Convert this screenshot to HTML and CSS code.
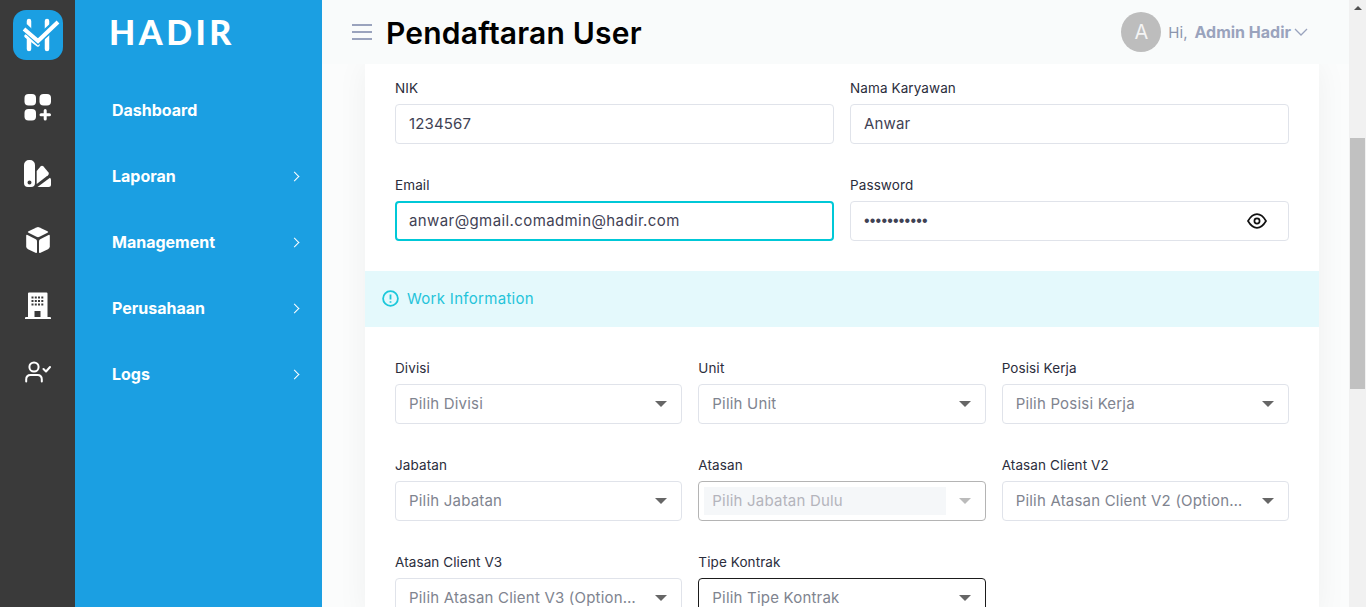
FILE: index.html
```html
<!DOCTYPE html>
<html lang="en">
<head>
    <meta charset="UTF-8">
    <title>Pendaftaran User</title>
    <link rel="stylesheet" href="styles.css">
</head>
<body>
<div class="app">
    <div class="rail">
        <div class="rail-logo">
            <svg width="50" height="50" viewBox="0 0 50 50" fill="none" stroke-linecap="round">
                <path d="M16 11V39M34 11V39" stroke="#fff" stroke-width="4.5"/>
                <path d="M13 26L25 35" stroke="#fff" stroke-width="3.500"/>
                <path d="M11 17L25 30L46 11" stroke="#1b9fe2" stroke-width="8" stroke-linecap="butt"/>
                <path d="M11 19L25 31L45 12" stroke="#fff" stroke-width="4" stroke-linecap="butt"/>
            </svg>
        </div>
        <div class="rail-icon">
            <svg width="28" height="28" viewBox="0 0 28 28" fill="#fff">
                <rect x="0.500" y="0" width="11.500" height="11.500" rx="4"/>
                <rect x="15.500" y="0" width="11.500" height="11.500" rx="4"/>
                <rect x="0.500" y="15" width="11.500" height="11.500" rx="4"/>
                <path d="M19.700 16.500a1.500 1.500 0 0 1 3 0V19.300H25.500a1.500 1.500 0 0 1 0 3H22.700V25a1.500 1.500 0 0 1-3 0V22.300H17a1.500 1.500 0 0 1 0-3H19.700Z"/>
            </svg>
        </div>
        <div class="rail-icon">
            <svg width="28" height="28" viewBox="0 0 28 28" fill="#fff">
                <path fill-rule="evenodd" d="M5 0H6A5 5 0 0 1 11 5V23A4 4 0 0 1 7 27H4A4 4 0 0 1 0 23V5A5 5 0 0 1 5 0ZM5.500 20.500a2 2 0 1 0 0 4a2 2 0 1 0 0-4Z"/>
                <path d="M12.700 11L16.500 6.500Q18 5 19.500 6.500L24.500 12.500Q25.500 14 24 15.200L12.700 24Z"/>
                <path d="M13.500 27L26 17.800Q27 18.500 27 20V24.500Q27 27 24.500 27Z"/>
            </svg>
        </div>
        <div class="rail-icon">
            <svg width="28" height="28" viewBox="0 0 28 28" fill="#fff">
                <path d="M12.500 1.400Q14 .7 15.500 1.400L23.500 5.200Q25 6 23.500 6.800L15.500 10.800Q14 11.500 12.500 10.800L4.500 6.800Q3 6 4.500 5.200Z"/>
                <path d="M2.200 9.800Q2.200 8.500 3.500 9L11.800 13.200Q13 13.900 13 15.200V26Q13 27.500 11.500 26.800L4 23.200Q2.200 22.200 2.200 20.500Z"/>
                <path d="M25.800 9.800Q25.800 8.500 24.500 9L16.200 13.200Q15 13.900 15 15.200V26Q15 27.500 16.500 26.800L24 23.200Q25.800 22.200 25.800 20.500Z"/>
            </svg>
        </div>
        <div class="rail-icon">
            <svg width="26" height="28" viewBox="0 0 26 28" fill="#fff">
                <path fill-rule="evenodd" d="M3 1.500Q3 .5 4 .5H21.500Q22.500 .5 22.500 1.500V25H25Q26 25 26 26V27H0V26Q0 25 1 25H3ZM9.500 19V25H15.500V19ZM6.500 4.500V6.500H8.500V4.500ZM9.800 4.500V6.500H11.800V4.500ZM13 4.500V6.500H15V4.500ZM16.300 4.500V6.500H18.300V4.500ZM6.500 8V10H8.500V8ZM9.800 8V10H11.800V8ZM13 8V10H15V8ZM16.300 8V10H18.300V8ZM6.500 11.500V13.500H8.500V11.500ZM9.800 11.500V13.500H11.800V11.500ZM13 11.500V13.500H15V11.500ZM16.300 11.500V13.500H18.300V11.500Z"/>
            </svg>
        </div>
        <div class="rail-icon">
            <svg width="26" height="22" viewBox="0 0 26 22" fill="none" stroke="#fff" stroke-linecap="round" stroke-linejoin="round">
                <circle cx="9" cy="6" r="4.600" stroke-width="2"/>
                <path d="M1.200 20.500V18.500Q1.200 14 5.500 14H12.500Q16.800 14 16.800 18.500V20.500" stroke-width="2"/>
                <path d="M18.500 8L21 10.500L25 6" stroke-width="2"/>
            </svg>
        </div>
    </div>

    <div class="sidebar">
        <div class="brand">HADIR</div>
        <div class="menu">
            <div class="menu-item">Dashboard</div>
            <div class="menu-item">Laporan <span class="chevron"></span></div>
            <div class="menu-item">Management <span class="chevron"></span></div>
            <div class="menu-item">Perusahaan <span class="chevron"></span></div>
            <div class="menu-item">Logs <span class="chevron"></span></div>
        </div>
    </div>

    <div class="main">
        <div class="topbar">
            <div class="burger"><span></span><span></span><span></span></div>
            <h1>Pendaftaran User</h1>
            <div class="user">
                <div class="avatar">A</div>
                <span class="hi">Hi,</span>
                <span class="user-name">Admin Hadir</span>
                <svg width="14" height="8" viewBox="0 0 14 8" fill="none" stroke="#9aa3bd" stroke-width="1.300"><path d="M1 1L7 7L13 1"/></svg>
            </div>
        </div>

        <div class="content">
            <div class="card">
                <div class="form-grid two">
                    <div class="field">
                        <label for="nik">NIK</label>
                        <input class="input" id="nik" type="text" value="1234567">
                    </div>
                    <div class="field">
                        <label for="nama">Nama Karyawan</label>
                        <input class="input" id="nama" type="text" value="Anwar">
                    </div>
                    <div class="field">
                        <label for="email">Email</label>
                        <input class="input focus" id="email" type="text" value="anwar@gmail.comadmin@hadir.com">
                    </div>
                    <div class="field">
                        <label for="password">Password</label>
                        <div class="password-wrap">
                            <input class="input password" id="password" type="password" value="admin@hadir">
                            <svg class="eye" width="20" height="16" viewBox="0 0 20 16" fill="none" stroke="#111" stroke-width="1.700">
                                <path d="M1 8Q5 1.200 10 1.200T19 8Q15 14.800 10 14.800T1 8Z"/>
                                <circle cx="10" cy="8" r="2.600"/>
                            </svg>
                        </div>
                    </div>
                </div>

                <div class="info-band">
                    <svg width="17" height="17" viewBox="0 0 17 17" fill="none" stroke="#1cc8da" stroke-width="1.800">
                        <circle cx="8.500" cy="8.500" r="7.400"/>
                        <path d="M8.500 4.500V9.500M8.500 11.300V12.800"/>
                    </svg>
                    <span>Work Information</span>
                </div>

                <div class="form-grid three">
                    <div class="field">
                        <label>Divisi</label>
                        <div class="select"><span class="select-text">Pilih Divisi</span><span class="caret"></span></div>
                    </div>
                    <div class="field">
                        <label>Unit</label>
                        <div class="select"><span class="select-text">Pilih Unit</span><span class="caret"></span></div>
                    </div>
                    <div class="field">
                        <label>Posisi Kerja</label>
                        <div class="select"><span class="select-text">Pilih Posisi Kerja</span><span class="caret"></span></div>
                    </div>
                    <div class="field">
                        <label>Jabatan</label>
                        <div class="select"><span class="select-text">Pilih Jabatan</span><span class="caret"></span></div>
                    </div>
                    <div class="field">
                        <label>Atasan</label>
                        <div class="select disabled"><span class="select-text">Pilih Jabatan Dulu</span><span class="caret"></span></div>
                    </div>
                    <div class="field">
                        <label>Atasan Client V2</label>
                        <div class="select"><span class="select-text">Pilih Atasan Client V2 (Optional)</span><span class="caret"></span></div>
                    </div>
                    <div class="field">
                        <label>Atasan Client V3</label>
                        <div class="select"><span class="select-text">Pilih Atasan Client V3 (Optional)</span><span class="caret"></span></div>
                    </div>
                    <div class="field">
                        <label>Tipe Kontrak</label>
                        <div class="select active"><span class="select-text">Pilih Tipe Kontrak</span><span class="caret"></span></div>
                    </div>
                </div>
            </div>
        </div>
    </div>

    <div class="scrollbar">
        <div class="scroll-up"></div>
        <div class="scroll-thumb"></div>
    </div>
</div>
</body>
</html>
```

FILE: styles.css
```css
html, body {
    margin: 0;
    padding: 0;
    height: 100%;
    overflow: hidden;
}

body {
    font-family: "Inter", "Noto Sans", sans-serif;
    color: #3f4254;
}

.app {
    display: flex;
    height: 607px;
}

/* dark icon rail */
.rail {
    width: 75px;
    flex: none;
    background-color: #3a3a3a;
    display: flex;
    flex-direction: column;
    align-items: center;
}

.rail-logo {
    width: 50px;
    height: 50px;
    margin-top: 10px;
    margin-bottom: 15px;
    background-color: #1b9fe2;
    border-radius: 13px;
    overflow: hidden;
}

.rail-icon {
    height: 66px;
    display: flex;
    align-items: center;
    justify-content: center;
}

/* blue menu */
.sidebar {
    width: 247px;
    flex: none;
    background-color: #1b9fe2;
    color: #fff;
}

.brand {
    height: 64px;
    margin-bottom: 13px;
    padding-left: 34px;
    font-family: "Lato", sans-serif;
    font-size: 34px;
    font-weight: 900;
    letter-spacing: 3.5px;
    line-height: 64px;
}

.menu-item {
    height: 66px;
    padding: 0 24px 0 37px;
    display: flex;
    align-items: center;
    justify-content: space-between;
    font-size: 16px;
    font-weight: 700;
}

.chevron {
    width: 6px;
    height: 6px;
    margin-top: 1px;
    border-top: 1.5px solid #fff;
    border-right: 1.5px solid #fff;
    transform: rotate(45deg);
}

/* main column */
.main {
    flex: 1;
    min-width: 0;
    display: flex;
    flex-direction: column;
    background-color: #fbfcfc;
}

.topbar {
    height: 64px;
    flex: none;
    padding: 0 41px 0 30px;
    display: flex;
    align-items: center;
    background-color: #f9fbfb;
}

.burger {
    width: 20px;
    margin-right: 14px;
    display: flex;
    flex-direction: column;
    gap: 5px;
}

.burger span {
    height: 2px;
    background-color: #9aa3bd;
}

h1 {
    margin: 2px 0 0;
    font-size: 30px;
    font-weight: 600;
    letter-spacing: 0.2px;
    color: #000;
}

.user {
    margin-left: auto;
    display: flex;
    align-items: center;
    color: #9aa3bd;
    font-size: 15px;
}

.avatar {
    width: 40px;
    height: 40px;
    border-radius: 50%;
    margin-right: 7px;
    background-color: #bdbdbd;
    color: #f4f4f4;
    font-size: 20px;
    text-align: center;
    line-height: 40px;
}

.hi {
    margin-right: 7px;
    color: #8c95ad;
}

.user-name {
    margin-right: 3px;
    font-size: 16px;
    font-weight: 700;
}

.content {
    flex: 1;
    min-height: 0;
    overflow: hidden;
    padding: 0 30px 0 43px;
}

.card {
    background-color: #fff;
    box-shadow: 0 0 30px rgba(0, 0, 0, 0.05);
}

.form-grid {
    padding: 0 30px;
    display: grid;
    column-gap: 16px;
    row-gap: 31px;
}

.form-grid.two {
    grid-template-columns: 1fr 1fr;
    padding-top: 14px;
    padding-bottom: 30px;
}

.form-grid.three {
    grid-template-columns: repeat(3, minmax(0, 1fr));
    padding-top: 31px;
}

.field label {
    display: block;
    height: 20px;
    line-height: 20px;
    font-size: 13.5px;
    letter-spacing: 0.1px;
    color: #2b2d3c;
}

.field .input,
.field .select {
    margin-top: 6px;
}

.input {
    display: block;
    box-sizing: border-box;
    width: 100%;
    height: 40px;
    padding: 0 13px 1px;
    border: 1px solid #e0e3ea;
    border-radius: 4px;
    outline: none;
    font-family: inherit;
    font-size: 15px;
    letter-spacing: 0.15px;
    color: #3f4254;
}

.input.focus {
    border: 2px solid #00c8d7;
    padding: 0 12px 1px;
    letter-spacing: 0.4px;
}

.input.password {
    font-family: "Liberation Sans", sans-serif;
    font-size: 16px;
    letter-spacing: 0.2px;
}

.password-wrap {
    position: relative;
}

.eye {
    position: absolute;
    right: 22px;
    top: 12px;
}

.info-band {
    height: 56px;
    padding: 0 0 1px 17px;
    box-sizing: border-box;
    display: flex;
    align-items: center;
    gap: 8px;
    background-color: #e4f9fc;
    color: #25c4da;
    font-size: 15px;
    letter-spacing: 0.3px;
}

.select {
    box-sizing: border-box;
    height: 40px;
    padding: 0 14px 0 13px;
    border: 1px solid #e0e3ea;
    border-radius: 4px;
    display: flex;
    align-items: center;
    justify-content: space-between;
    gap: 19px;
    font-size: 15px;
    letter-spacing: 0.2px;
    color: #80848f;
}

.select-text {
    min-width: 0;
    margin-bottom: 2px;
    overflow: hidden;
    white-space: nowrap;
    text-overflow: ellipsis;
}

.caret {
    flex: none;
    border-left: 6px solid transparent;
    border-right: 6px solid transparent;
    border-top: 6px solid #666;
}

.select.disabled {
    border-color: #b4b4b4;
    padding-left: 5px;
    gap: 13px;
    color: #b4b4bc;
}

.select.disabled .select-text {
    flex: 1;
    height: 28px;
    margin-bottom: 0;
    line-height: 28px;
    padding-left: 8px;
    background-color: #f5f7f9;
}

.select.disabled .caret {
    border-top-color: #bbb;
}

.select.active {
    border-color: #1b1b1b;
}

/* page scrollbar, page is already scrolled down a bit */
.scrollbar {
    width: 17px;
    flex: none;
    background-color: #f1f1f1;
}

.scroll-up {
    width: 0;
    margin: 6px auto 0;
    border-left: 4px solid transparent;
    border-right: 4px solid transparent;
    border-bottom: 4px solid #505050;
}

.scroll-thumb {
    height: 251px;
    margin: 128px 1px 0;
    background-color: #c1c1c1;
}
```
